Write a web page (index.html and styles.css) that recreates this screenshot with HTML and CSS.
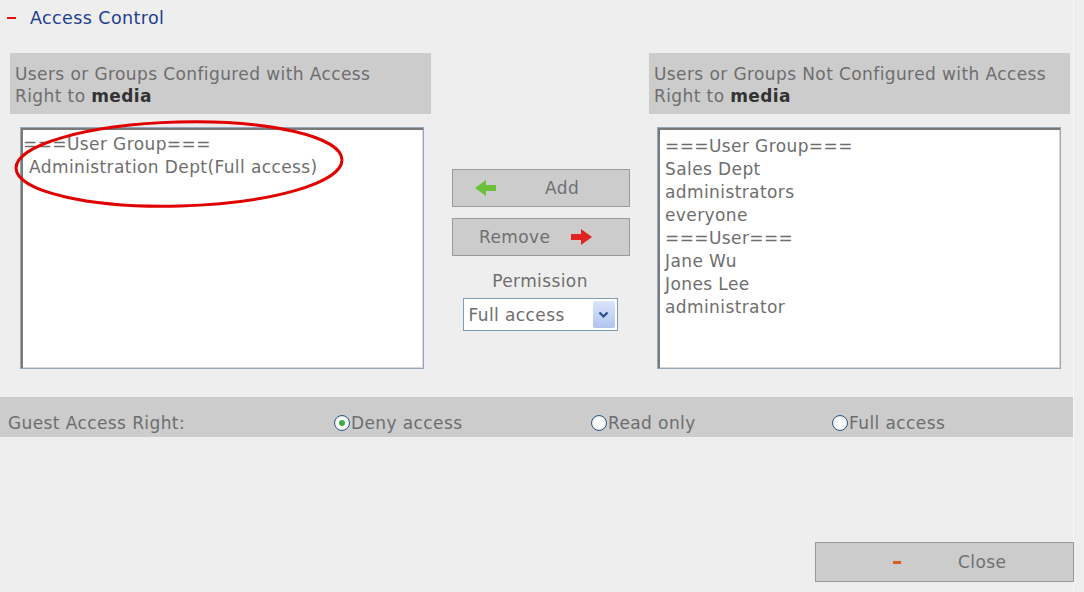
FILE: index.html
```html
<!DOCTYPE html>
<html lang="en">
<head>
    <meta charset="UTF-8">
    <title>Access Control</title>
    <link rel="stylesheet" href="styles.css">
</head>
<body>
    <div class="panel">
        <div class="section-title"><span class="collapse"></span>Access Control</div>

        <div class="access-row">
            <div class="column left">
                <div class="col-head">Users or Groups Configured with Access<br>Right to <b>media</b></div>
                <div class="listbox">
                    <div class="list-item">===User Group===</div>
                    <div class="list-item">Administration Dept(Full access)</div>
                    <svg class="marker" width="340" height="96" viewBox="0 0 340 96">
                        <ellipse cx="167" cy="45" rx="163" ry="42" fill="none" stroke="#e00000" stroke-width="3" transform="rotate(-1.5 167 45)"/>
                    </svg>
                </div>
            </div>

            <div class="middle">
                <button class="btn add-btn">
                    <svg class="arrow" width="22" height="16" viewBox="0 0 22 16"><path d="M0 8 L11 0 L11 5 L21 5 L21 11 L11 11 L11 16 Z" fill="#6cbf3a"/></svg>
                    <span class="btn-label">Add</span>
                </button>
                <button class="btn remove-btn">
                    <span class="btn-label">Remove</span>
                    <svg class="arrow" width="22" height="16" viewBox="0 0 22 16"><path d="M22 8 L11 0 L11 5 L1 5 L1 11 L11 11 L11 16 Z" fill="#e02424"/></svg>
                </button>
                <div class="perm-label">Permission</div>
                <div class="select">
                    <span class="select-value">Full access</span>
                    <span class="select-btn">
                        <svg width="11" height="8" viewBox="0 0 11 8"><path d="M1.5 1.5 L5.5 5.5 L9.5 1.5" fill="none" stroke="#2a4a8c" stroke-width="2.2"/></svg>
                    </span>
                </div>
            </div>

            <div class="column right">
                <div class="col-head">Users or Groups Not Configured with Access<br>Right to <b>media</b></div>
                <div class="listbox">
                    <div class="list-item">===User Group===</div>
                    <div class="list-item">Sales Dept</div>
                    <div class="list-item">administrators</div>
                    <div class="list-item">everyone</div>
                    <div class="list-item">===User===</div>
                    <div class="list-item">Jane Wu</div>
                    <div class="list-item">Jones Lee</div>
                    <div class="list-item">administrator</div>
                </div>
            </div>
        </div>

        <div class="guest-bar">
            <div class="guest-label">Guest Access Right:</div>
            <div class="radio r1"><span class="dot checked"></span>Deny access</div>
            <div class="radio r2"><span class="dot"></span>Read only</div>
            <div class="radio r3"><span class="dot"></span>Full access</div>
        </div>

        <div class="footer">
            <button class="btn close-btn">
                <span class="close-dash"></span>
                <span class="btn-label">Close</span>
            </button>
        </div>
    </div>
</body>
</html>
```

FILE: styles.css
```css
body {
    margin: 0;
    background-color: #eeeeee;
    font-family: "DejaVu Sans", sans-serif;
    font-size: 17px;
    letter-spacing: 0.4px;
    color: #6e6e6e;
}
.panel {
    width: 1073px;
    height: 592px;
    border-right: 1px solid #f8f8f8;
}
.section-title {
    display: flex;
    align-items: center;
    padding: 6px 0 0 7px;
    height: 24px;
    color: #1d3f8f;
    font-size: 17.5px;
}
.collapse {
    width: 9px;
    height: 2px;
    background: #e01010;
    margin-right: 14px;
}
.access-row {
    display: flex;
    margin-top: 23px;
}
.column {
    width: 421px;
}
.column.left {
    margin-left: 10px;
}
.col-head {
    background-color: #cccccc;
    height: 61px;
    box-sizing: border-box;
    padding: 10px 5px;
    line-height: 22px;
    white-space: nowrap;
}
.col-head b {
    color: #333;
}
.listbox {
    position: relative;
    margin-top: 13px;
    height: 242px;
    box-sizing: border-box;
    background: #fff;
    border: 1px solid #95a8bc;
    box-shadow: inset 2px 2px 0 #7a7a7a, inset -1px -1px 0 #d8d8d8;
    padding: 6px 7px;
}
.left .listbox {
    margin-left: 10px;
    width: 404px;
    padding-left: 2px;
    padding-top: 5px;
}
.left .list-item + .list-item {
    padding-left: 6px;
}
.right .listbox {
    margin-left: 8px;
    width: 404px;
    padding-top: 7px;
}
.list-item {
    line-height: 23px;
    white-space: nowrap;
}
.marker {
    position: absolute;
    left: -9px;
    top: -9px;
}
.middle {
    width: 218px;
    display: flex;
    flex-direction: column;
    align-items: center;
    padding-top: 116px;
}
.btn {
    width: 178px;
    height: 38px;
    margin-bottom: 11px;
    background-color: #cccccc;
    border: 1px solid #9a9a9a;
    font-family: inherit;
    font-size: 17px;
    letter-spacing: 0.4px;
    color: #707070;
    display: flex;
    align-items: center;
    justify-content: flex-start;
    padding: 0;
}
.middle .btn {
    margin-left: 2px;
}
.add-btn {
    gap: 48px;
    padding-left: 22px;
}
.remove-btn {
    gap: 20px;
    padding-left: 26px;
}
.perm-label {
    margin-top: 3px;
    line-height: 22px;
}
.select {
    margin-top: 6px;
    width: 155px;
    height: 33px;
    box-sizing: border-box;
    background: #fff;
    border: 1px solid #7f9db9;
    display: flex;
    align-items: center;
    padding: 2px;
}
.select-value {
    flex: 1;
    padding-left: 3px;
}
.select-btn {
    width: 22px;
    height: 27px;
    background: linear-gradient(#dbe6fb, #b0c5ef);
    border-radius: 2px;
    display: flex;
    align-items: center;
    justify-content: center;
}
.guest-bar {
    margin-top: 28px;
    height: 40px;
    background-color: #cccccc;
    display: flex;
    align-items: center;
    position: relative;
}
.guest-label {
    padding: 12px 0 0 8px;
}
.radio {
    position: absolute;
    display: flex;
    align-items: center;
    top: 16px;
    line-height: 20px;
}
.r1 { left: 334px; }
.r2 { left: 591px; }
.r3 { left: 832px; }
.dot {
    width: 14px;
    height: 14px;
    border-radius: 50%;
    border: 1px solid #2b5a88;
    background: radial-gradient(circle, #fff 40%, #d8d8d0 100%);
    margin-right: 1px;
    position: relative;
}
.dot.checked::after {
    content: "";
    position: absolute;
    left: 4px;
    top: 4px;
    width: 6px;
    height: 6px;
    border-radius: 50%;
    background: #35b040;
}
.footer {
    display: flex;
    justify-content: flex-end;
    margin-top: 105px;
}
.close-btn {
    width: 259px;
    height: 40px;
    margin-right: -1px;
    gap: 57px;
    padding-left: 77px;
}
.close-dash {
    width: 8px;
    height: 3px;
    background: #e05a20;
}
```
